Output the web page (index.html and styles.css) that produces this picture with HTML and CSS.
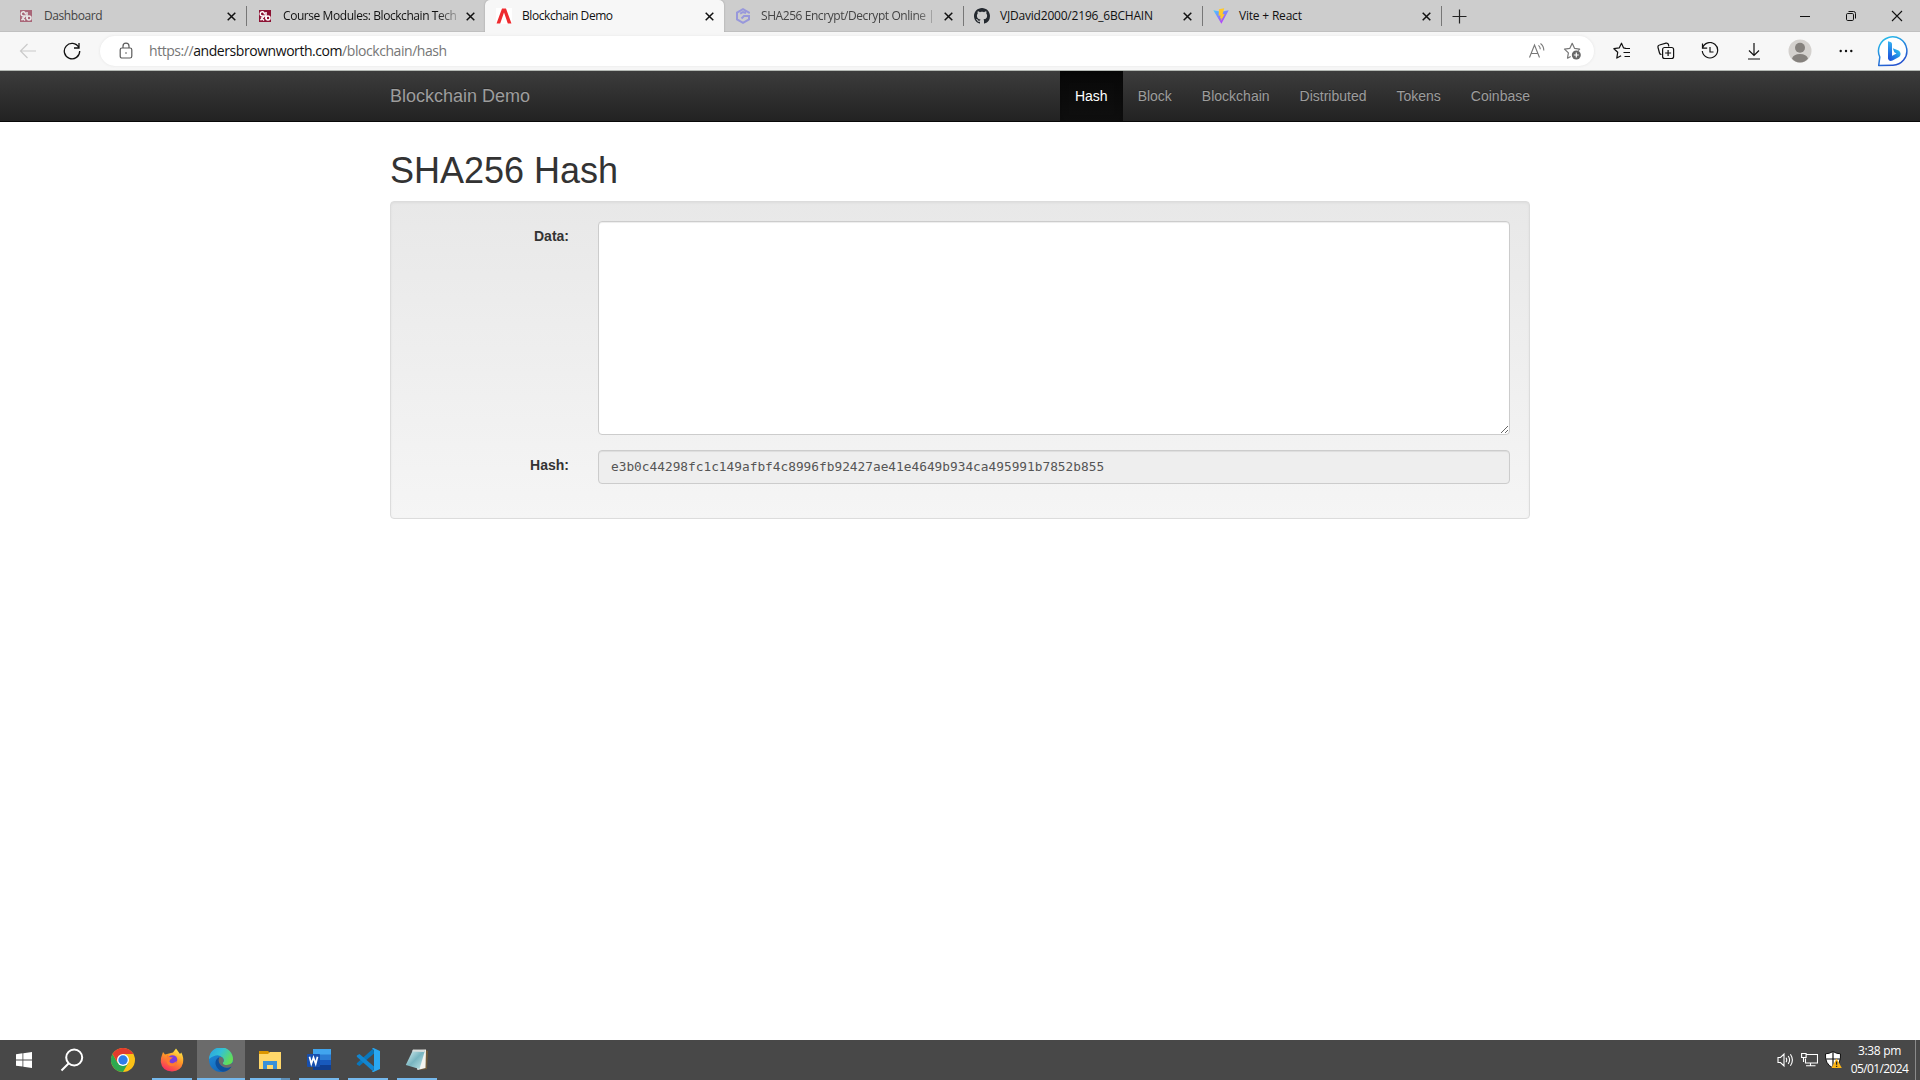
FILE: index.html
```html
<!DOCTYPE html>
<html lang="en">
<head>
<meta charset="utf-8">
<title>Blockchain Demo</title>
<link rel="stylesheet" href="styles.css">
</head>
<body>
<svg class="defs" width="0" height="0">
  <defs>
    <symbol id="close" viewBox="0 0 9 9"><path d="M.7.7l7.600 7.600M8.300.7L.7 8.300" fill="none" stroke="#111" stroke-width="1.500"/></symbol>
    <symbol id="canvas" viewBox="0 0 16 16"><rect x="2" y="2" width="12" height="12" fill="#8c1233"/><path d="M7.300 6.500a2.100 2.100 0 1 0-2 1.500h2L3.500 12.200M4 9.500l3 3M9 4v7" fill="none" stroke="#fff" stroke-width="1.500"/><circle cx="11" cy="10" r="2" fill="none" stroke="#fff" stroke-width="1.500"/></symbol>
    <linearGradient id="bingRing" x1="0" y1="0" x2=".5" y2="1"><stop offset="0" stop-color="#28c9ee"/><stop offset="1" stop-color="#2554cf"/></linearGradient>
    <linearGradient id="bingB" x1="0" y1="1" x2="1" y2="0"><stop offset="0" stop-color="#1b48d6"/><stop offset=".5" stop-color="#2287e6"/><stop offset="1" stop-color="#35d0f0"/></linearGradient>
    <linearGradient id="bingStem" x1="0" y1="0" x2="0" y2="1"><stop offset="0" stop-color="#35b4f2"/><stop offset="1" stop-color="#1b4fdb"/></linearGradient>
    <linearGradient id="vite" x1="0" y1="0" x2=".6" y2="1"><stop offset="0" stop-color="#41d1ff"/><stop offset="1" stop-color="#bd34fe"/></linearGradient>
    <linearGradient id="edgeTop" x1="0" y1="0" x2="1" y2=".5"><stop offset="0" stop-color="#2b9fe0"/><stop offset=".5" stop-color="#33c1d6"/><stop offset="1" stop-color="#63dd58"/></linearGradient>
    <linearGradient id="edgeLow" x1="0" y1="0" x2=".6" y2="1"><stop offset="0" stop-color="#2191dc"/><stop offset="1" stop-color="#1264b8"/></linearGradient>
    <linearGradient id="fox" x1=".8" y1="0" x2=".3" y2="1"><stop offset="0" stop-color="#fff04a"/><stop offset=".45" stop-color="#ff9926"/><stop offset="1" stop-color="#f82a61"/></linearGradient>
    <linearGradient id="note" x1="0" y1="0" x2="1" y2="1"><stop offset="0" stop-color="#e1f4f5"/><stop offset=".5" stop-color="#78b5c0"/><stop offset="1" stop-color="#c5e8ea"/></linearGradient>
  </defs>
</svg>

<div class="tabstrip">
  <div class="tab asleep">
    <svg class="favicon" viewBox="0 0 16 16"><use href="#canvas"/></svg>
    <span class="title">Dashboard</span>
    <svg class="x"><use href="#close"/></svg>
  </div>
  <div class="tab ruled">
    <svg class="favicon" viewBox="0 0 16 16"><use href="#canvas"/></svg>
    <span class="title faded">Course Modules: Blockchain Tech</span>
    <svg class="x"><use href="#close"/></svg>
  </div>
  <div class="tab current">
    <svg class="favicon" viewBox="0 0 16 16"><path d="M0 0h16v16H0z" fill="#fff"/><path d="M.5 15.500L6 .5h4l5.500 15h-3.700L8 4.500 4.200 15.500z" fill="#ee2b2f"/></svg>
    <span class="title">Blockchain Demo</span>
    <svg class="x"><use href="#close"/></svg>
  </div>
  <div class="tab asleep">
    <svg class="favicon" viewBox="0 0 16 16"><path d="M14 5.500V4.600L8 1.200 2 4.600v6.800l6 3.400 6-3.400V8H9L6.500 10.500M11 5L8 4 5.200 5.700" fill="none" stroke="#6d6de8" stroke-width="2"/></svg>
    <span class="title faded">SHA256 Encrypt/Decrypt Online |</span>
    <svg class="x"><use href="#close"/></svg>
  </div>
  <div class="tab ruled">
    <svg class="favicon" viewBox="0 0 16 16"><path fill="#24292f" d="M8 0C3.580 0 0 3.580 0 8c0 3.540 2.290 6.530 5.470 7.590.4.070.55-.17.55-.38 0-.19-.01-.82-.01-1.490-2.010.37-2.530-.49-2.690-.94-.09-.23-.48-.94-.82-1.130-.28-.15-.68-.52-.01-.53.63-.01 1.080.58 1.230.82.72 1.210 1.870.87 2.330.66.07-.52.28-.87.51-1.070-1.780-.2-3.640-.89-3.640-3.950 0-.87.31-1.590.82-2.150-.08-.2-.36-1.020.08-2.120 0 0 .67-.21 2.200.82.640-.18 1.320-.27 2-.27s1.360.09 2 .27c1.530-1.040 2.200-.82 2.200-.82.44 1.100.16 1.920.08 2.120.51.56.82 1.270.82 2.150 0 3.070-1.870 3.750-3.650 3.950.29.25.54.73.54 1.480 0 1.070-.01 1.930-.01 2.200 0 .21.15.46.55.38A8.010 8.010 0 0 0 16 8c0-4.420-3.580-8-8-8z"/></svg>
    <span class="title wide">VJDavid2000/2196_6BCHAIN</span>
    <svg class="x"><use href="#close"/></svg>
  </div>
  <div class="tab ruled">
    <svg class="favicon" viewBox="0 0 16 16"><path d="M.3 2.300L8 3.700l7.700-1.400L8.400 15.700z" fill="url(#vite)"/><path d="M11.200.2L6 1.200l-.4 6.600 2-.3-.6 3 1.500-.4-.8 3.500 4-7.700-2.100.3z" fill="#ffc92b"/></svg>
    <span class="title wide">Vite + React</span>
    <svg class="x"><use href="#close"/></svg>
  </div>
  <div class="newtab ruled"><svg width="15" height="15" viewBox="0 0 15 15"><path d="M7.500.5v14M.5 7.500h14" stroke="#222" stroke-width="1.200"/></svg></div>
  <div class="caption">
    <svg viewBox="0 0 12 12"><path d="M1 6.500h10" stroke="#111"/></svg>
    <svg viewBox="0 0 12 12" fill="none" stroke="#111"><rect x="1.500" y="3.500" width="7" height="7" rx="1.200"/><path d="M3.500 1.500h5a2 2 0 0 1 2 2v5"/></svg>
    <svg viewBox="0 0 12 12"><path d="M1 1l10 10M11 1L1 11" stroke="#111" stroke-width="1.100"/></svg>
  </div>
</div>

<div class="toolbar">
  <div class="btn back"><svg width="18" height="18" viewBox="0 0 18 18" fill="none" stroke="#cacaca" stroke-width="1.200"><path d="M17 9H1.500M8.500 2l-7 7 7 7"/></svg></div>
  <div class="btn"><svg width="18" height="18" viewBox="0 0 18 18" fill="none" stroke="#111" stroke-width="1.300"><path d="M15.800 5.500A7.700 7.700 0 1 0 16.700 9M16 1v5h-5"/></svg></div>
  <div class="address">
    <svg class="lock" width="14" height="18" viewBox="0 0 14 18" fill="none" stroke="#5b5b5b" stroke-width="1.200"><rect x="1.200" y="6" width="11.600" height="10" rx="1.800"/><path d="M4 6V4.200a3 3 0 0 1 6 0V6"/><circle cx="7" cy="11" r=".8" fill="#555" stroke="none"/></svg>
    <span class="url">https://<b>andersbrownworth.com</b>/blockchain/hash</span>
    <svg class="read" width="18" height="18" viewBox="0 0 18 18" fill="none" stroke="#777" stroke-width="1.100"><path d="M2.500 15.500L7.500 3l5 12.500M4.300 11.500h6.500M11.500 3.300q1.800 1.500 1.800 4M13.500 1.500q3.300 2.500 3.300 7"/></svg>
    <svg width="20" height="20" viewBox="0 0 20 20"><path d="M16.200 9.700l1.500-1.600-5.200-.8L10.200 2.300 7.900 7.300l-5.400.8 3.900 3.800-.9 5.300 3.200-1.700" fill="none" stroke="#777" stroke-width="1.200" stroke-linejoin="round"/><circle cx="14.300" cy="14" r="4.500" fill="#666"/><path d="M14.300 11.500v5M11.800 14h5" stroke="#fff" stroke-width="1.200"/></svg>
  </div>
  <div class="btn"><svg width="18" height="18" viewBox="0 0 18 18" fill="none" stroke="#111" stroke-width="1.200"><path d="M12.500 6.200L10.600 5.900 8.500 1.200 6.200 5.900.9 6.700l3.800 3.600-.9 5.800 4.300-2.400M11.500 6.500H17M10.500 10.500H17M11.500 14.500H17" stroke-linejoin="round"/></svg></div>
  <div class="btn"><svg width="18" height="18" viewBox="0 0 18 18" fill="none" stroke="#111" stroke-width="1.200"><path d="M4.500 12.500a2 2 0 0 1-2-1.500L1 5.500A2 2 0 0 1 2.500 3L9 1.200A2 2 0 0 1 11.500 3l.4 1.500"/><rect x="5.600" y="5.500" width="11" height="11" rx="2"/><path d="M11.100 8v6M8.100 11h6"/></svg></div>
  <div class="btn"><svg width="18" height="18" viewBox="0 0 18 18" fill="none" stroke="#111" stroke-width="1.200"><path d="M1.600 6A7.700 7.700 0 1 1 1.300 9M1.500 1.500V6.200h4.700M9 5v5h3.500"/></svg></div>
  <div class="btn"><svg width="18" height="18" viewBox="0 0 18 18" fill="none" stroke="#111" stroke-width="1.200"><path d="M9 1v12M4 8.500l5 5 5-5M3 17h12"/></svg></div>
  <div class="btn avatar"><svg width="24" height="24" viewBox="0 0 24 24"><circle cx="12" cy="12" r="11.500" fill="#d4d1ce"/><circle cx="12" cy="8.700" r="5" fill="#85817d"/><path d="M4 19.500q1.500-4.500 8-4.500t8 4.500q-3 4-8 4t-8-4z" fill="#85817d"/></svg></div>
  <div class="btn"><svg width="14" height="4" viewBox="0 0 14 4" fill="#111"><circle cx="1.700" cy="2" r="1.200"/><circle cx="7" cy="2" r="1.200"/><circle cx="12.300" cy="2" r="1.200"/></svg></div>
  <div class="btn bing"><svg width="32" height="32" viewBox="0 0 32 32"><path d="M1.700 30.500L2.800 22A14.200 14.200 0 1 1 16 30.200z" fill="#fff" stroke="url(#bingRing)" stroke-width="1.500" stroke-linejoin="round"/><path d="M11 6.200l2.500.8q1.500.5 1.500 2v13l-4 2z" fill="url(#bingStem)"/><path d="M11 23l8.500-4.500-2.200-1.200-1.500-4 5.200 2q3 1.500 2.500 4.500-.3 1.500-2 2.500l-6 3.300q-4 1.200-4.500-2.600z" fill="url(#bingB)"/></svg></div>
</div>

<nav class="navbar">
  <div class="container">
    <span class="brand">Blockchain Demo</span>
    <ul class="links">
      <li class="active">Hash</li><li>Block</li><li>Blockchain</li><li>Distributed</li><li>Tokens</li><li>Coinbase</li>
    </ul>
  </div>
</nav>

<main class="page">
  <h1>SHA256 Hash</h1>
  <form class="well">
    <div class="row"><label for="data">Data:</label><textarea id="data" rows="10"></textarea></div>
    <div class="row"><label for="hash">Hash:</label><input id="hash" disabled value="e3b0c44298fc1c149afbf4c8996fb92427ae41e4649b934ca495991b7852b855"></div>
  </form>
</main>

<footer class="taskbar">
  <div class="app start"><svg width="16" height="16" viewBox="0 0 16 16" fill="#fff"><path d="M0 2.200l6.500-.9v6.200H0zM7.300 1.200L16 0v7.500H7.300zM0 8.400h6.500v6.200L0 13.700zM7.300 8.400H16V16l-8.700-1.200z"/></svg></div>
  <div class="app search"><svg width="24" height="24" viewBox="0 0 24 24" fill="none" stroke="#fff" stroke-width="2"><circle cx="14.200" cy="9.500" r="8"/><path d="M8.500 15.500L1.500 22.500"/></svg></div>
  <div class="app"><svg width="24" height="24" viewBox="0 0 24 24"><circle cx="12" cy="12" r="12" fill="#fbc116"/><path d="M1.600 6A12 12 0 0 0 12 24l5.200-9L12 12 6.800 15z" fill="#2da94f"/><path d="M1.600 6A12 12 0 0 1 22.400 6H12L6.800 9.500 6.800 15z" fill="#e33b2e"/><circle cx="12" cy="12" r="6" fill="#fff"/><circle cx="12" cy="12" r="4.700" fill="#2f7de9"/></svg></div>
  <div class="app run"><svg width="24" height="24" viewBox="0 0 24 24"><path d="M2 7l1-3 2 2.500L9 5.500l4-1L16 .5l4 5.500 1.300-1.500q2.700 5 1.700 10.500-2 8-11 8.500Q2 23 .8 14 .5 10 2 7z" fill="url(#fox)"/><circle cx="12.500" cy="12" r="4.800" fill="#7a3ddc"/><path d="M7 6l2.500 3 3.500.5-3 2.300-.5 2q1.500 2.200 4 1.200l3.500-2q-1 5-5 5-5 0-5.500-5z" fill="#ff7b30"/></svg></div>
  <div class="app run active"><svg width="24" height="24" viewBox="0 0 24 24"><circle cx="12" cy="12" r="12" fill="url(#edgeLow)"/><path d="M0 11A12 12 0 0 1 24 11.500q0 5.500-6 5.500-4.500 0-4.300-2 2-2.500.3-5Q9 4 0 11z" fill="url(#edgeTop)"/><path d="M10.500 9Q6 11 6.500 16q1.500 6 7.500 7.800Q19.500 23.500 22.500 18.500 17 21 13 18 9 14.500 10.500 9z" fill="#0e4f9c"/><path d="M10.500 9Q8 13.500 12 17.500q5 3.800 10.500 1L24 16l-1-1q-2.500 2-5 2-4.500 0-4.300-2 2-2.500.3-5-1.500-1.500-3.500-1z" fill="#6b6b6b"/></svg></div>
  <div class="app run multi"><svg width="24" height="24" viewBox="0 0 24 24"><path d="M1 3h9l2 2h10v4H1z" fill="#dc9600"/><path d="M1 6h9l2-2h11v17H1z" fill="#ffd76a"/><path d="M5 21v-8h14v8h-4v-4H9v4z" fill="#3a90d7"/></svg></div>
  <div class="app run"><svg width="24" height="24" viewBox="0 0 24 24"><path d="M6 1h18v6H6z" fill="#41a5ee"/><path d="M6 6.500h18V12H6z" fill="#2b7cd3"/><path d="M6 12h18v5.500H6z" fill="#185abd"/><path d="M6 17h18v5H6z" fill="#103f91"/><rect y="6" width="13" height="13" rx="1" fill="#174fae"/><path d="M2.500 8.800l1.800 7 2.200-6.300 2.200 6.300 1.800-7" fill="none" stroke="#fff" stroke-width="1.700"/></svg></div>
  <div class="app run"><svg width="24" height="24" viewBox="0 0 24 24"><path d="M18 5.500L3.500 18 .8 16.500v-1.200L17.500.2z" fill="#0877bd"/><path d="M17.500 23.800L.8 8.700V7.500L3.500 6 18 18.500z" fill="#1286d0"/><path d="M17.500 0L24 3v18l-6.500 3q-1 0-1.500-.5l2-1.500V2L16 .5q.5-.5 1.500-.5z" fill="#29a8f2"/></svg></div>
  <div class="app run"><svg width="24" height="24" viewBox="0 0 24 24"><path d="M20 2l3 1-1 18-7 1z" fill="#715b39"/><path d="M8 2l13-.5-.5 18.500-8 2z" fill="#f4f4ee"/><path d="M8 2l12 .5-5.500 18.500L.8 17z" fill="url(#note)"/><path d="M8 1.500l12 .5-.6 2L7 3.500z" fill="#d9dedc"/></svg></div>
  <div class="tray">
    <svg width="17" height="16" viewBox="0 0 17 16" fill="none" stroke="#fff" stroke-width="1.100"><path d="M1 5.500h2.500L7 2v12L3.500 10.500H1zM9 5.800q1.500 2.200 0 4.400M11.200 4q2.800 4 0 8M13.400 2.200q4 5.800 0 11.600"/></svg>
    <svg width="17" height="16" viewBox="0 0 17 16" fill="none" stroke="#fff" stroke-width="1.100"><path d="M5.500 2.500h11v8.500h-12V6.500M9.500 11v2.500M5 13.700h9.500M.6 1.500h4.500v4H.6zM2.500 5.500V10"/></svg>
    <svg width="17" height="18" viewBox="0 0 17 18"><path d="M8 .5q3.500 2.300 7.500 2.300 1 10-7.500 14.200Q-.5 12.800.5 2.800 4.500 2.800 8 .5z" fill="#fff" stroke="#111"/><path d="M8 1v16M.5 8h15" stroke="#111" stroke-width="1.200"/><path d="M11.500 7.500l5.300 9.500H6.500z" fill="#fcb514"/><path d="M11.600 10.500v3.300M11.600 14.700v1.300" stroke="#222" stroke-width="1.300"/></svg>
  </div>
  <div class="clock"><span>3:38 pm</span><span class="date">05/01/2024</span></div>
  <div class="desktop"></div>
</footer>
</body>
</html>
```
FILE: styles.css
```css
* { box-sizing: border-box; }
body {
  margin: 0;
  height: 1080px;
  overflow: hidden;
  display: flex;
  flex-direction: column;
  background: #fff;
  color: #333;
  font: 14px/20px "Liberation Sans", sans-serif;
}
svg { display: block; flex: none; }
.defs { position: absolute; }

/* Browser tabs */
.tabstrip {
  display: flex;
  flex: none;
  height: 32px;
  padding-left: 7px;
  background: #cdcdcd;
  box-shadow: inset 0 -1px #c0c0c0;
  font: 12px/16px "Open Sans", sans-serif;
  color: #111;
}
.tab {
  display: flex;
  align-items: center;
  width: 239px;
  padding-left: 11px;
}
.ruled {
  background: linear-gradient(#777, #777) 0 6px / 1px 20px no-repeat;
}
.favicon { width: 16px; height: 16px; }
.title {
  width: 177px;
  margin-left: 10px;
  white-space: nowrap;
  letter-spacing: -.43px;
}
.wide { letter-spacing: -.2px; }
.faded {
  -webkit-mask: linear-gradient(90deg, #000 154px, rgba(0, 0, 0, .2) 175px);
  mask: linear-gradient(90deg, #000 154px, rgba(0, 0, 0, .2) 175px);
}
.x { width: 9px; height: 9px; margin-left: 6px; }
.asleep .favicon { opacity: .55; }
.asleep .title { color: #444; }
.current {
  background: #f7f7f7;
  border-radius: 5px 5px 0 0;
  box-shadow: 0 0 2px #999;
  clip-path: inset(0 -3px);
}
.newtab {
  display: flex;
  align-items: center;
  width: 40px;
  padding-left: 11px;
}
.caption { display: flex; margin-left: auto; }
.caption svg { width: 46px; height: 12px; margin-top: 10px; }

/* Address toolbar */
.toolbar {
  display: flex;
  flex: none;
  align-items: center;
  height: 39px;
  padding: 0 2px 0 6px;
  background: #f7f7f7;
  border-bottom: 1px solid #b4b9b4;
}
.btn {
  display: flex;
  align-items: center;
  justify-content: center;
  width: 44px;
}
.address {
  display: flex;
  align-items: center;
  width: 1494px;
  height: 30px;
  margin: 0 6px;
  padding: 0 12px 0 19px;
  border-radius: 15px;
  background: #fff;
  box-shadow: 0 0 3px #e4e4e4;
}
.url {
  margin: 0 auto 0 16px;
  font: 14px/20px "Open Sans", sans-serif;
  letter-spacing: -.44px;
  color: #767676;
}
.url b { font-weight: 400; color: #111; }
.read { margin-right: 17px; }
.avatar { width: 48px; }
.bing { width: 50px; }

/* Site navigation */
.navbar {
  flex: none;
  height: 51px;
  background: linear-gradient(#3c3c3c, #222);
  border-bottom: 1px solid #080808;
  color: #9d9d9d;
  text-shadow: 0 -1px rgba(0, 0, 0, .25);
}
.container {
  display: flex;
  justify-content: space-between;
  width: 1170px;
  margin: 0 auto;
  padding-left: 15px;
}
.brand { padding: 15px 0; font-size: 18px; }
.links { display: flex; margin: 0; padding: 0; list-style: none; }
.links li { padding: 15px; }
.links .active {
  color: #fff;
  background: linear-gradient(#080808, #0f0f0f);
  box-shadow: inset 0 3px 9px rgba(0, 0, 0, .25);
}

/* Hash form */
.page { flex: 1; width: 1140px; margin: 0 auto; padding-top: 29px; }
h1 { margin: 0 0 10px; font-size: 36px; font-weight: 500; line-height: 40px; }
.well {
  height: 318px;
  padding: 19px;
  background: linear-gradient(#e8e8e8, #f5f5f5);
  border: 1px solid #dcdcdc;
  border-radius: 4px;
  box-shadow: inset 0 1px 3px rgba(0, 0, 0, .05), 0 1px 0 rgba(255, 255, 255, .1);
}
.row { display: flex; margin-bottom: 15px; }
.row label {
  flex: 1;
  padding: 5px 29px 0 0;
  text-align: right;
  font-weight: 700;
}
textarea, input {
  display: block;
  width: 912px;
  height: 34px;
  margin: 0;
  padding: 5px 12px 7px;
  border: 1px solid #ccc;
  border-radius: 4px;
  background: #fff;
  box-shadow: inset 0 1px 1px rgba(0, 0, 0, .075);
  color: #555;
  font: 12.800px/20px "DejaVu Sans Mono", monospace;
}
textarea { height: 214px; resize: vertical; }
input { background: #eee; }

/* Desktop taskbar */
.taskbar {
  display: flex;
  flex: none;
  height: 40px;
  background: #484848;
  color: #fff;
}
.app {
  display: flex;
  align-items: center;
  justify-content: center;
  width: 49px;
  padding-right: 2px;
}
.start { width: 48px; padding-right: 0; }
.search { width: 51px; padding-right: 4px; }
.run { background: linear-gradient(#76b9ed, #76b9ed) 4px 38px / 40px 2px no-repeat; }
.active.run {
  background: linear-gradient(#76b9ed, #76b9ed) 0 38px / 48px 2px no-repeat,
    linear-gradient(#6b6b6b, #6b6b6b) 0 0 / 48px 40px no-repeat;
}
.multi {
  background: linear-gradient(90deg, #76b9ed 31px, #5d8fb8 31px) 4px 38px / 40px 2px no-repeat;
}
.tray { display: flex; align-items: center; gap: 7px; margin-left: auto; }
.clock {
  display: flex;
  flex-direction: column;
  align-items: center;
  width: 73px;
  padding: 2px 0 0 2px;
  font: 12px/18px "Open Sans", sans-serif;
  letter-spacing: -.3px;
}
.date { letter-spacing: -.6px; }
.desktop { width: 5px; border-left: 1px solid #8a8a8a; }
```
